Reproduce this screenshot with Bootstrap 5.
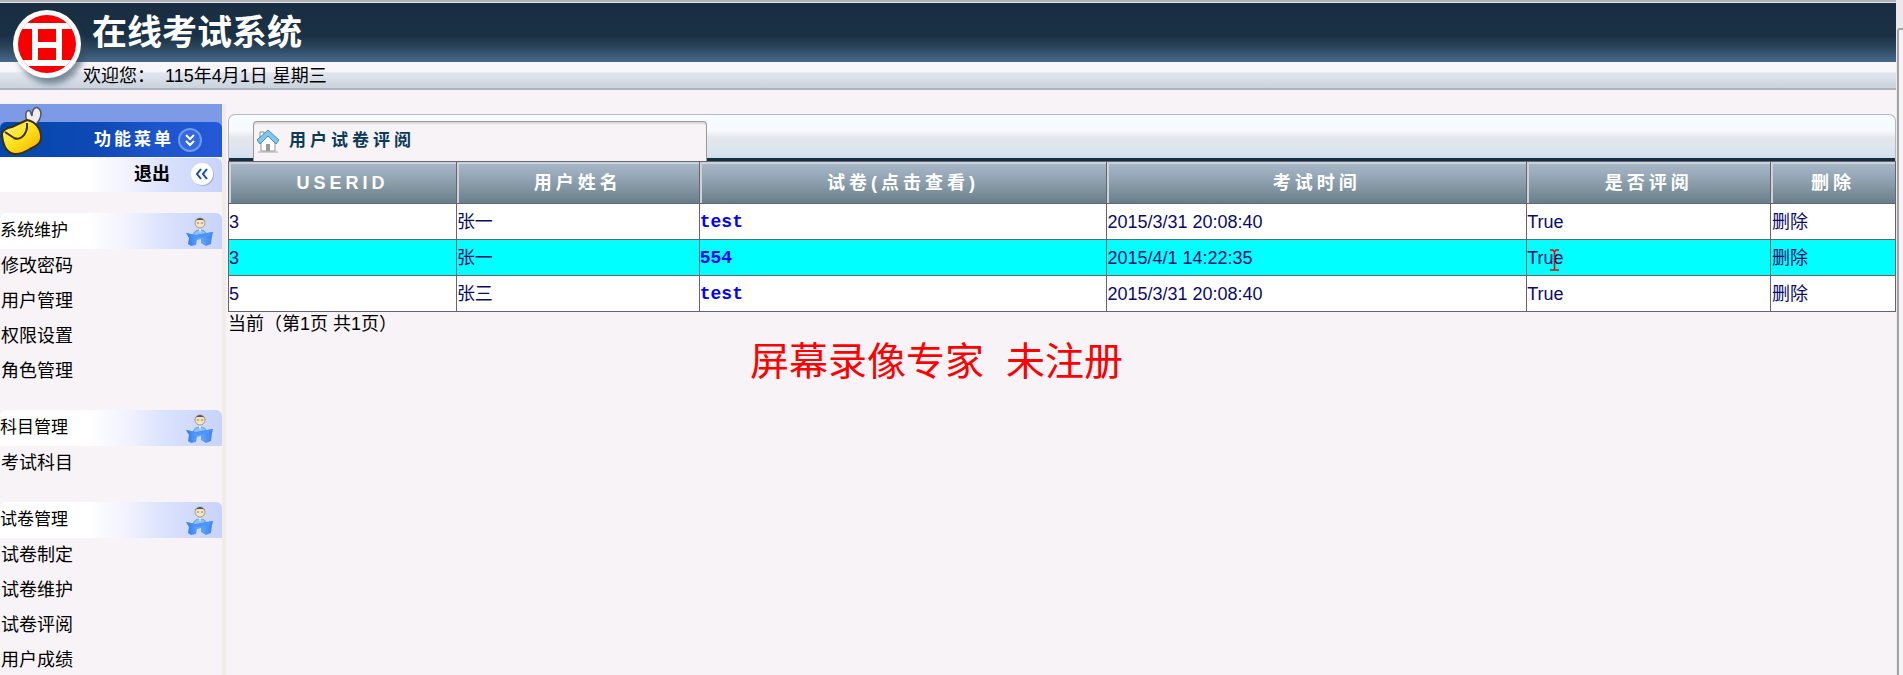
<!DOCTYPE html>
<html lang="zh-CN">
<head>
<meta charset="utf-8">
<meta name="viewport" content="width=device-width, initial-scale=1">
<title>在线考试系统</title>
<link href="https://cdn.jsdelivr.net/npm/bootstrap@5.3.0/dist/css/bootstrap.min.css" rel="stylesheet">
<style>
body{background:#f7f3f7;color:#000;font:18px/24px "Liberation Sans","Noto Sans CJK SC",sans-serif}
a{color:inherit;text-decoration:none}
.page-wrap{min-height:100vh}
.frame-edge{width:7px;padding-top:28px;background:#ebe9eb}
.frame-edge div{margin-left:1px;border-left:2px solid #a3a49f;border-top:2px solid #a3a49f;border-top-left-radius:3px;background:#f5f3f5}
.site-head{border-top:2px solid #b4b4b8}
.head-dark{height:60px;background:linear-gradient(#1a2e42 0%,#1a3044 55%,#2b465c 75%,#48688a 100%);padding-left:92px;border-top:1px solid #e5e5ea}
.head-dark h1{font-size:35px;line-height:60px;font-weight:700;color:#fff}
.head-light{height:28px;line-height:28px;background:linear-gradient(#f8f5f9 0,#f8f6fa 36%,#e3e6f1 42%,#ccd5de 92%);border-bottom:2px solid #afb4c2;padding-left:83px}
.head-logo{left:8px;top:4px}
.side-bar{width:226px;margin-top:14px;border-right:4px solid #f0ede8}
.side-top{height:18px;background:#7d9ae6}
.menu-head{height:35px;padding-right:20px;font-size:17px;font-weight:700;letter-spacing:3px;color:#fff;background:linear-gradient(90deg,#0246ad 0,#1049b5 45%,#1c55cc 70%,#2458d8 100%);border-radius:6px 6px 0 0}
.menu-wrap{background:#7d9ae6}
.bee{left:0;top:2px}
.soft-row{height:36px;background:linear-gradient(90deg,#fff 0,#fff 40%,#eef0ff 60%,#d9e1fd 75%,#c8d3fa 100%);border-radius:6px 6px 0 0}
.exit-row{height:34px;margin-top:1px;padding:0 8px 2px 0;gap:20px;font-weight:700;border-radius:0 6px 0 0}
.exit-row svg,.menu-head svg,.soft-row svg{flex:none}
.group-block{margin-top:21px}
.group-block h2{font-size:17px;line-height:36px;font-weight:400;margin:0}
.group-block .soft-row{padding-right:8px}
.side-link{height:35px;line-height:34px;padding-left:1px}
.main-col{margin-top:24px;padding-left:2px;min-width:0}
.tab-strip{height:47px;border:1px solid #b5b9c6;border-width:1px 1px 0;border-radius:7px 7px 0 0;background:linear-gradient(#f8fbff 0,#f6f9fe 35%,#e5e7eb 48%,#dbe5ef 75%,#d2deea 100%);padding-left:24px;box-shadow:inset 0 -3px #162e42}
.tab-face{width:454px;height:40px;border:1px solid #9b9b98;border-bottom:0;border-radius:4px 4px 0 0;background:#f7f3f7;box-shadow:inset 0 2px 1px #dddadd;padding-left:3px;gap:10px;color:#0b3b57;font-size:17px;font-weight:700;letter-spacing:4px;margin:0}
.exam-table{width:100%;border-collapse:collapse;table-layout:fixed;color:#0b0b6b}
.exam-table th,.exam-table td{border:1px solid #686474;padding:0}
.exam-table th{height:42px;text-align:center;color:#fff;letter-spacing:4px;background:linear-gradient(#a9b8c8 0,#95a7b7 35%,#81949f 65%,#677f8b 100%);box-shadow:inset 2px 2px #cbd3d9}
.exam-table td{height:36px;background:#fff}
.exam-table tr.picked td{background:#0ff}
.exam-table .paper{font:bold 18px/24px "Liberation Mono",monospace;color:#00f}
.exam-table td:last-child{padding-left:1px}
.text-cursor{left:22px;top:1px}
.notice{left:0;right:30px;top:334px;font:39px/48px "Noto Sans CJK SC",sans-serif;color:#f00;gap:22px;pointer-events:none}
.pager{line-height:24px}
</style>
</head>
<body>
<div class="page-wrap d-flex">
  <div class="flex-grow-1 d-flex flex-column overflow-hidden vh-100">
    <header class="site-head position-relative">
      <div class="head-dark"><h1 class="m-0">在线考试系统</h1></div>
      <div class="head-light">欢迎您：&nbsp; 115年4月1日 星期三</div>
      <svg class="head-logo position-absolute" width="80" height="86" viewBox="0 0 80 86" aria-hidden="true">
        <defs><filter id="soft"><feGaussianBlur stdDeviation="3"/></filter><clipPath id="disc"><circle cx="39" cy="38" r="29"/></clipPath></defs>
        <circle cx="43" cy="45" r="33" fill="#304860" opacity=".6" filter="url(#soft)"/>
        <circle cx="39" cy="38" r="34" fill="#fff"/>
        <circle cx="39" cy="38" r="29" fill="#f80000"/>
        <g clip-path="url(#disc)" fill="none" stroke="#fff"><path d="M8 20H70M8 57H70" stroke-width="6"/><path d="M27 20V58M51 20V58" stroke-width="6"/><path d="M27 39H51" stroke-width="6"/></g>
      </svg>
    </header>
    <div class="d-flex flex-grow-1 overflow-hidden">
      <nav class="side-bar flex-shrink-0">
        <div class="menu-wrap position-relative">
          <div class="side-top"></div>
          <div class="menu-head d-flex align-items-center justify-content-end gap-1">功能菜单
            <svg width="24" height="24" viewBox="0 0 24 24" fill="none" aria-hidden="true"><circle cx="12" cy="12" r="11" fill="#3468dc" stroke="#6c9bee" stroke-width="2"/><path d="M8 7l4 4 4-4M8 13l4 4 4-4" stroke="#fff" stroke-width="2"/></svg>
          </div>
          <svg class="bee position-absolute" width="44" height="50" viewBox="0 0 44 50" aria-hidden="true">
            <defs><linearGradient id="gold" x2="1" y2="1"><stop stop-color="#fff39a"/><stop offset=".5" stop-color="#ffe21a"/><stop offset="1" stop-color="#eda900"/></linearGradient></defs>
            <path d="M28 19C24 8 26 3 30 5l2 5C32 2 37-1 40 4s-2 14-7 17z" fill="#eceef2" stroke="#555" stroke-width="1.5"/>
            <path d="M2 29C2 24 6 22 12 21L27 14C34 15 42 22 41 33C40 38 36 40 30 43C20 49 12 50 7 44Q3 39 2 29z" fill="url(#gold)" stroke="#3c3000" stroke-width="2"/>
            <path d="M5 26L14 32Q18 34 22 31Q28 26 27 17" fill="none" stroke="#3c3000" stroke-width="2"/>
          </svg>
        </div>
        <div class="soft-row exit-row d-flex align-items-center justify-content-end"><a href="#">退出</a>
          <svg width="24" height="24" viewBox="0 0 24 24" fill="none" aria-hidden="true"><circle cx="13" cy="13" r="11" fill="#aab3d3"/><circle cx="12" cy="12" r="11" fill="#fff"/><path d="M11 7l-4 5 4 5M17 7l-4 5 4 5" stroke="#1648b0" stroke-width="2"/></svg>
        </div>
        <section class="group-block">
          <div class="soft-row d-flex justify-content-between align-items-center"><h2>系统维护</h2>
            <svg width="29" height="32" viewBox="0 0 29 32" aria-hidden="true"><defs><linearGradient id="desk" x2="1"><stop stop-color="#2f78ea"/><stop offset=".5" stop-color="#65a9fb"/><stop offset="1" stop-color="#3d83ef"/></linearGradient></defs>
              <g id="clerk"><path d="M8 21c0-8 14-8 14 0z" fill="#8fc0f2" stroke="#5d97dd"/><circle cx="15" cy="8" r="5" fill="#f9e3bd" stroke="#a09a90"/><path d="M10 6q5-6 10 0l-2-1h-6z" fill="#555"/><path d="M12 8h2M16 8h2" stroke="#777"/><path d="M14 14l1 4 1-4" fill="#fff"/><path d="M1 18l10 2 5-1 12-2-1 4-1 8-5 2-5-3v-4l-4 1-1 5-5 1-3-2 1-6z" fill="url(#desk)"/><path d="M1 18l10 2 5-1 12-2-6 5-10 1z" fill="#4d94f4"/></g></svg>
          </div>
          <a class="side-link d-block" href="#">修改密码</a><a class="side-link d-block" href="#">用户管理</a><a class="side-link d-block" href="#">权限设置</a><a class="side-link d-block" href="#">角色管理</a>
        </section>
        <section class="group-block">
          <div class="soft-row d-flex justify-content-between align-items-center"><h2>科目管理</h2><svg width="29" height="32" viewBox="0 0 29 32" aria-hidden="true"><use href="#clerk"/></svg></div>
          <a class="side-link d-block" href="#">考试科目</a>
        </section>
        <section class="group-block">
          <div class="soft-row d-flex justify-content-between align-items-center"><h2>试卷管理</h2><svg width="29" height="32" viewBox="0 0 29 32" aria-hidden="true"><use href="#clerk"/></svg></div>
          <a class="side-link d-block" href="#">试卷制定</a><a class="side-link d-block" href="#">试卷维护</a><a class="side-link d-block" href="#">试卷评阅</a><a class="side-link d-block" href="#">用户成绩</a>
        </section>
      </nav>
      <main class="main-col flex-grow-1">
        <div class="tab-strip d-flex align-items-end">
          <h2 class="tab-face d-flex align-items-center">
            <svg width="22" height="24" viewBox="0 0 22 24" aria-hidden="true"><path d="M3 2h4v5H3z" fill="#fff" stroke="#888"/><path d="M4 11l7-7 7 7v10H4z" fill="#fdfdfd" stroke="#999"/><path d="M9 14h4v7H9z" fill="#999"/><path d="M0 10L11 0l11 10-3 4-8-8-8 8z" fill="#84c5ee" stroke="#408fc1"/><path d="M1 22h20" stroke="#aaa"/></svg>
            <span>用户试卷评阅</span></h2>
        </div>
        <table class="exam-table">
          <colgroup><col style="width:13.67%"><col style="width:14.57%"><col style="width:24.46%"><col style="width:25.18%"><col style="width:14.63%"><col></colgroup>
          <thead><tr><th scope="col">USERID</th><th scope="col">用户姓名</th><th scope="col">试卷(点击查看)</th><th scope="col">考试时间</th><th scope="col">是否评阅</th><th scope="col">删除</th></tr></thead>
          <tbody>
            <tr><td>3</td><td>张一</td><td><a class="paper" href="#">test</a></td><td>2015/3/31 20:08:40</td><td>True</td><td><a href="#">删除</a></td></tr>
            <tr class="picked"><td>3</td><td>张一</td><td><a class="paper" href="#">554</a></td><td>2015/4/1 14:22:35</td><td><span class="position-relative">True<svg class="text-cursor position-absolute" width="11" height="22" viewBox="0 0 11 22" fill="none" stroke="#f00000" aria-hidden="true"><path d="M1 1H4L5.500 3 7 1H10M5.500 3V20M1 21H10" stroke-width="1.500"/></svg></span></td><td><a href="#">删除</a></td></tr>
            <tr><td>5</td><td>张三</td><td><a class="paper" href="#">test</a></td><td>2015/3/31 20:08:40</td><td>True</td><td><a href="#">删除</a></td></tr>
          </tbody>
        </table>
        <div class="pager">当前（第1页 共1页）</div>
      </main>
    </div>
  </div>
  <div class="frame-edge d-flex flex-column flex-shrink-0"><div class="flex-grow-1"></div></div>
</div>
<div class="notice position-absolute d-flex justify-content-center align-items-center"><span>屏幕录像专家</span><span>未注册</span></div>
<script src="https://cdn.jsdelivr.net/npm/bootstrap@5.3.0/dist/js/bootstrap.bundle.min.js"></script>
</body>
</html>
